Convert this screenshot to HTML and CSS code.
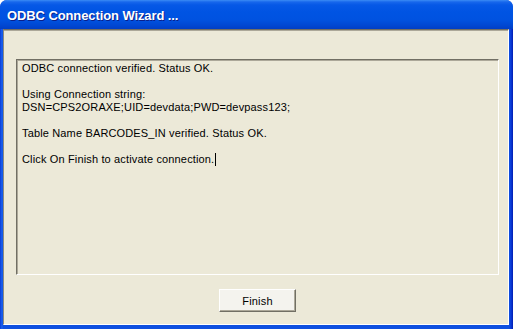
FILE: index.html
```html
<!DOCTYPE html>
<html>
<head>
<meta charset="utf-8">
<link rel="stylesheet" href="styles.css">
</head>
<body>
<div class="window">
  <div class="titlebar"><span class="title">ODBC Connection Wizard ...</span></div>
  <div class="frame">
    <div class="client">
      <div class="textbox">
        <p>ODBC connection verified. Status OK.</p>
        <p>&nbsp;</p>
        <p>Using Connection string:</p>
        <p>DSN=CPS2ORAXE;UID=devdata;PWD=devpass123;</p>
        <p>&nbsp;</p>
        <p>Table Name BARCODES_IN verified. Status OK.</p>
        <p>&nbsp;</p>
        <p>Click On Finish to activate connection.<span class="caret"></span></p>
      </div>
      <div class="actions">
        <button class="btn">Finish</button>
      </div>
    </div>
  </div>
</div>
</body>
</html>
```

FILE: styles.css
```css
html, body {
  margin: 0;
  padding: 0;
  background: #ffffff;
}
.window {
  width: 513px;
  height: 329px;
  display: flex;
  flex-direction: column;
  border-radius: 7px 7px 0 0;
  overflow: hidden;
  background: #0842d6;
}
.titlebar {
  height: 29px;
  flex: none;
  display: flex;
  align-items: center;
  padding-left: 7px;
  background: linear-gradient(to bottom, #3b8cf5 0px, #1767ec 2px, #0658e6 5px, #0054e3 12px, #0052e0 20px, #0046d1 26px, #003ec5 29px);
}
.title {
  font-family: "Liberation Sans", Arial, sans-serif;
  font-weight: bold;
  font-size: 13px;
  color: #ffffff;
  letter-spacing: -0.1px;
  padding-top: 1px;
  text-shadow: 1px 1px 0 #0a1f8a;
}
.frame {
  flex: 1;
  display: flex;
  padding: 0 4px 4px 3px;
  background:
    linear-gradient(to right, #0a3ad8 0, #1a63ee 2px, transparent 3px),
    linear-gradient(to left, #001cb0 0, #0a3ad8 2px, #0d4fe0 4px);
}
.client {
  flex: 1;
  display: flex;
  flex-direction: column;
  background: #ece9d8;
  border-style: solid;
  border-width: 1px;
  border-color: #716f64 #ffffff #ffffff #8d8a7d;
  box-shadow: inset 0 1px 0 #aca899;
  padding: 29px 9px 12px 12px;
}
.textbox {
  height: 216px;
  box-sizing: border-box;
  border-style: solid;
  border-width: 1px;
  border-color: #716f64 #ffffff #ffffff #716f64;
  box-shadow: inset 1px 1px 0 #aca899;
  padding: 2px 4px 2px 5px;
  font-family: "Liberation Sans", Arial, sans-serif;
  font-size: 11px;
  letter-spacing: 0.15px;
  line-height: 13px;
  color: #000000;
}
.textbox p {
  margin: 0;
  white-space: nowrap;
}
.caret {
  display: inline-block;
  width: 1px;
  height: 13px;
  background: #000;
  vertical-align: top;
  margin-left: 1px;
}
.actions {
  display: flex;
  justify-content: center;
  margin-top: 14px;
}
.btn {
  width: 77px;
  height: 23px;
  margin: 0;
  padding: 0;
  font-family: "Liberation Sans", Arial, sans-serif;
  font-size: 11px;
  letter-spacing: 0.2px;
  color: #000;
  background: #f4f3ee;
  border-style: solid;
  border-width: 1px;
  border-color: #ffffff #716f64 #716f64 #ffffff;
  box-shadow: inset -1px -1px 0 #aca899;
}
```
